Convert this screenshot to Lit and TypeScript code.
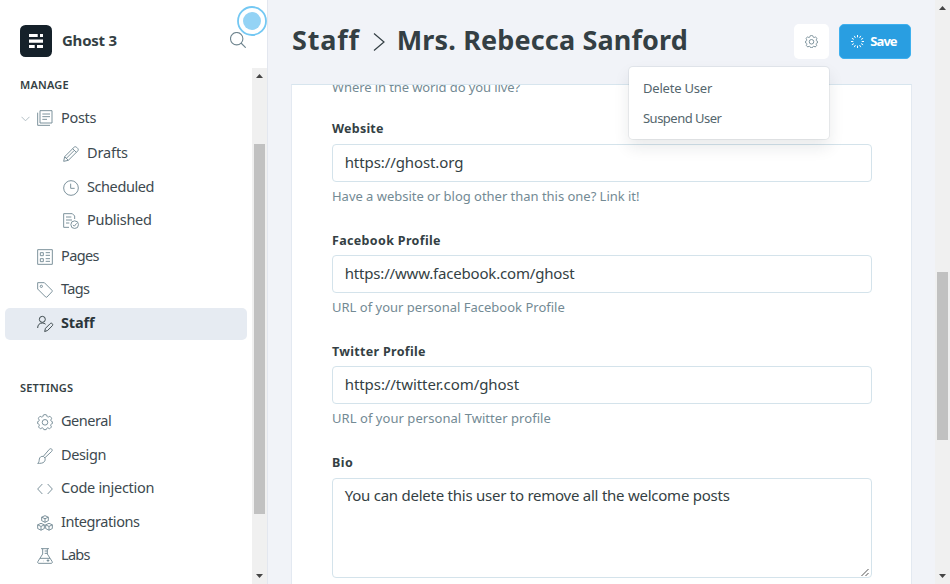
import { LitElement, html, css, svg, nothing } from "lit";
import { customElement, property, state } from "lit/decorators.js";

const measureContext = document.createElement("canvas").getContext("2d")!;

/** One line of text, tracked so that its glyphs span the given width. */
@customElement("fit-text")
class FitText extends LitElement {
  @property() text = "";
  @property({ type: Number }) span = 0;
  @state() private tracking = 0;

  static styles = css`
    :host { display: inline-block; white-space: nowrap; }
  `;

  firstUpdated() {
    const s = getComputedStyle(this);
    measureContext.font = `${s.fontWeight} ${s.fontSize} ${s.fontFamily}`;
    const m = measureContext.measureText(this.text);
    const ink = m.actualBoundingBoxLeft + m.actualBoundingBoxRight;
    this.tracking = (this.span - ink) / Math.max(1, this.text.length - 1);
  }

  render() {
    return html`<span style="letter-spacing:${this.tracking.toFixed(3)}px">${this.text}</span>`;
  }
}

const gear = svg`<path d="M9.500 1.500c.7-.7 4.300-.7 5 0l.7 2.200c.3.900 1.200 1.200 2 .8l2-1c1 .1 2.500 2.100 2.700 3.300l-1.100 2.100c-.4.800 0 1.800.8 2l1.400.6v3l-1.600.7c-.9.3-1.200 1.200-.8 2l1 2c-.1 1-2.100 2.700-3 2.800l-2-1.100c-.8-.4-1.800 0-2.100.8l-.8 1.800h-3.400l-.8-1.800c-.3-.8-1.300-1.200-2.100-.8l-2 1.100c-1-.1-2.900-1.800-3-2.800l1-2c.4-.8.1-1.700-.8-2L1 14.500v-3l1.400-.6c.9-.3 1.200-1.200.8-2L2.100 6.800c.2-1.200 1.700-3.200 2.700-3.300l2 1c.8.4 1.700.1 2-.8z"/><circle cx="12" cy="12.500" r="4.200"/>`;

const icons: Record<string, unknown> = {
  posts: svg`<path d="M4.500 1h18v18.500h-18zM1 4v19h18.500M8 6h11.500M8 10h11.500M8 14h7"/>`,
  drafts: svg`<path d="M1 23l1.500-7L16.500 2c1.200-1.200 2.800-1.200 4 0l1.500 1.500c1.200 1.200 1.200 2.800 0 4L8 21.500zM2.500 16L8 21.500M14.500 4l5.500 5.500M17 6.500L5 18.500"/>`,
  scheduled: svg`<circle cx="12" cy="12" r="11"/><path d="M11.500 5.500v7h6"/>`,
  published: svg`<path d="M9 21.500H1V1h13l3.500 3.500V9M4.500 6h8M4.500 10.500h9M4.500 15h5"/><circle cx="17.500" cy="17.500" r="5.700"/><path d="M15 17.800l2 2 3.400-4.300"/>`,
  pages: svg`<path d="M1 1h22v22H1zM5 5.500h4.500V10H5zM5 14.500h4.500V19H5zM13 5.500h6.500M13 9.500h6.500M13 14.500h6.500M13 18.500h6.500"/>`,
  tags: svg`<path d="M1 1h10L22.500 12.500c.7.7.7 1.300 0 2L15 22.500c-.7.7-1.300.7-2 0L1 10.500z"/><circle cx="6.500" cy="6.500" r="1.700"/>`,
  staff: svg`<circle cx="8" cy="5" r="4.500"/><path d="M1 18c0-4.500 2.500-7.500 7-7.500 2 0 3.500.6 4.800 1.800M11.500 23.300l1.200-4.800 7-7c1-1 2.300-.9 3.200 0 .8.800.9 2.200 0 3.200l-7 7z"/>`,
  general: gear,
  design: svg`<path d="M9.500 12.500L18.500 2c1.100-1.200 2.600-1.300 3.600-.3 1 1 .9 2.500-.3 3.600L12 14.500M9.500 12.500l3 3M9.300 12.600c-3-.6-5.300 1.200-5.800 4C3.200 19.300 3 22 1 23c4 0 8 .2 10-2.500 1.300-1.800 1.500-3.200.8-5"/>`,
  code: svg`<path d="M8 4.500L1 12l7 7.500M16 4.500L23 12l-7 7.500"/>`,
  integrations: svg`<path d="M12 1l5 2.300v5.200l-5 2.500-5-2.500V3.300zM7 3.300l5 2.300 5-2.300M12 5.600V11M6 12.500l5 2.200v5.600l-5 2.500-5-2.500v-5.600zM1 14.700l5 2.500 5-2.500M6 17.200v5.600M18 12.500l5 2.200v5.600l-5 2.500-5-2.500v-5.600zM13 14.700l5 2.500 5-2.500M18 17.200v5.600"/>`,
  labs: svg`<path d="M6 1h12M8.500 1v8L1.500 20c-1 1.700-.5 3 1.500 3h18c2 0 2.500-1.300 1.500-3L15.500 9V1M4.500 15.500h15M11.500 4.500h4M11.500 8h4M14.500 18.800h4M16.500 16.800v4M9 19.500h.5"/>`,
};

interface NavItem { icon: string; label: string; span: number; child?: boolean; active?: boolean; open?: boolean; }

const manage: NavItem[] = [
  { icon: "posts", label: "Posts", span: 34.500, open: true },
  { icon: "drafts", label: "Drafts", span: 40, child: true },
  { icon: "scheduled", label: "Scheduled", span: 66.500, child: true },
  { icon: "published", label: "Published", span: 63, child: true },
  { icon: "pages", label: "Pages", span: 37.500 },
  { icon: "tags", label: "Tags", span: 29 },
  { icon: "staff", label: "Staff", span: 34.500, active: true },
];
const settings: NavItem[] = [
  { icon: "general", label: "General", span: 50 },
  { icon: "design", label: "Design", span: 43.500 },
  { icon: "code", label: "Code injection", span: 92.500 },
  { icon: "integrations", label: "Integrations", span: 79 },
  { icon: "labs", label: "Labs", span: 28.500 },
];

@customElement("scroll-bar")
class ScrollBar extends LitElement {
  @property({ type: Number }) offset = 0;
  @property({ type: Number }) size = 0;

  static styles = css`
    :host { display: flex; flex-direction: column; width: 15px; background: #f0f0f0; flex: none; }
    .arrow { display: block; width: 15px; height: 15px; flex: none; fill: #454545; }
    .track { flex: 1; }
    .thumb { width: 11px; margin-left: 2px; background: #c1c1c1; }
  `;

  render() {
    return html`
      <svg class="arrow" viewBox="0 0 15 15"><path d="M4 10h7L7.500 6z"/></svg>
      <div class="track">
        <div style="height:${this.offset}px"></div>
        <div class="thumb" style="height:${this.size}px"></div>
      </div>
      <svg class="arrow" viewBox="0 0 15 15"><path d="M4 5h7L7.500 9z"/></svg>`;
  }
}

@customElement("side-nav")
class SideNav extends LitElement {
  static styles = css`
    :host { display: flex; flex-direction: column; width: 267px; flex: none; background: #fff; border-right: 1px solid #e3e7ef; position: relative; }
    .head { display: flex; align-items: center; height: 68px; padding: 0 21px 0 20px; box-sizing: border-box; flex: none; }
    .logo { width: 32px; height: 32px; margin-top: 14px; flex: none; }
    .name { margin: 11px 0 0 10px; font-size: 15px; font-weight: 700; color: #343f44; flex: 1; }
    .search { width: 16px; height: 16px; margin-top: 12px; fill: none; stroke: #6f858f; stroke-width: 1.1; }
    .pulse { position: absolute; left: 237px; top: 6px; width: 30px; height: 30px; }
    .scroll { display: flex; flex: 1; min-height: 0; }
    .list { flex: 1; padding: 0 5px; }
    h2 { margin: 0; padding: 9px 0 0 15px; height: 25px; box-sizing: content-box; font-size: 11px; font-weight: 600; line-height: 16px; color: #343f44; }
    h2.second { padding-top: 38.500px; height: 26px; }
    .row { display: flex; align-items: center; height: 32px; margin-bottom: 1.6px; border-radius: 5px; font-size: 14.500px; color: #3d494f; }
    .row.open { margin-bottom: 4px; }
    .row.last-child { margin-bottom: 3.600px; }
    .row.active { background: #e6ebf2; font-weight: 700; color: #2b363b; }
    .arrow { width: 9px; height: 6px; margin: 2px 7px 0 16px; fill: none; stroke: #b3bfc5; }
    .indent { width: 32px; }
    .indent.deep { width: 58px; }
    .icon { width: 16px; height: 16px; flex: none; fill: none; stroke: #738a94; stroke-width: 1.4; stroke-linejoin: round; overflow: visible; }
    .active .icon { stroke: #343f44; }
    .label { margin: 0 0 4px 8px; }
    .open .label { margin-bottom: 3px; }
  `;

  private row(item: NavItem, i: number, all: NavItem[]) {
    const lastChild = item.child && !all[i + 1]?.child;
    return html`<div class="row ${item.open ? "open" : ""} ${item.active ? "active" : ""} ${lastChild ? "last-child" : ""}">
      ${item.open
        ? html`<svg class="arrow" viewBox="0 0 9 6"><path d="M.5.800l4 4 4-4"/></svg>`
        : html`<div class="indent ${item.child ? "deep" : ""}"></div>`}
      <svg class="icon" viewBox="0 0 24 24">${icons[item.icon]}</svg>
      <fit-text class="label" text=${item.label} span=${item.span}></fit-text>
    </div>`;
  }

  render() {
    return html`
      <div class="head">
        <svg class="logo" viewBox="0 0 32 32">
          <rect width="32" height="32" rx="5.500" fill="#15212a"/>
          <path fill="#fff" d="M9 9h8.700v3H9zM20 9h3v3h-3zM9 14.500h14v3.300H9zM9 20h5.700v3H9zM17 20h6v3h-6z"/>
        </svg>
        <fit-text class="name" text="Ghost 3" span="54.5"></fit-text>
        <svg class="search" viewBox="0 0 16 16"><circle cx="6.700" cy="6.700" r="6.200"/><path d="M11 11l4.700 4.700"/></svg>
      </div>
      <div class="scroll">
        <div class="list">
          <h2><fit-text text="MANAGE" span="47.5"></fit-text></h2>
          ${manage.map((n, i, a) => this.row(n, i, a))}
          <h2 class="second"><fit-text text="SETTINGS" span="53"></fit-text></h2>
          ${settings.map((n, i, a) => this.row(n, i, a))}
        </div>
        <scroll-bar offset="61" size="370"></scroll-bar>
      </div>
      <svg class="pulse" viewBox="0 0 30 30">
        <circle cx="15" cy="15" r="14" fill="#fff" stroke="#74c8f3" stroke-width="1.800"/>
        <circle cx="15" cy="15" r="9" fill="#94d3f5"/>
      </svg>`;
  }
}

interface Field { label: string; span: number; value: string; valueSpan: number; help?: string; helpSpan?: number; area?: boolean; }

const fields: Field[] = [
  { label: "Website", span: 51, value: "https://ghost.org", valueSpan: 116.500, help: "Have a website or blog other than this one? Link it!", helpSpan: 306 },
  { label: "Facebook Profile", span: 107, value: "https://www.facebook.com/ghost", valueSpan: 229.500, help: "URL of your personal Facebook Profile", helpSpan: 231.500 },
  { label: "Twitter Profile", span: 93, value: "https://twitter.com/ghost", valueSpan: 174, help: "URL of your personal Twitter profile", helpSpan: 217.500 },
  { label: "Bio", span: 20, value: "You can delete this user to remove all the welcome posts", valueSpan: 385, area: true },
];

@customElement("app-root")
class AppRoot extends LitElement {
  static styles = css`
    :host { display: flex; width: 950px; height: 584px; overflow: hidden; background: #f1f3f8; font-family: "Noto Sans", "Open Sans", sans-serif; color: #343f44; }
    .main { flex: 1; display: flex; flex-direction: column; padding: 0 23px; min-width: 0; }
    .top { display: flex; align-items: center; height: 84px; flex: none; position: relative; box-sizing: border-box; padding: 0 1px 1px 0; }
    .title { font-size: 27px; font-weight: 700; line-height: 36px; color: #343f44; margin: 0 0 3px 1px; }
    .sep { width: 12px; height: 18px; margin: 0 11px 0 13px; fill: none; stroke: #343f44; stroke-width: 1.2; }
    .crumbs { display: flex; align-items: center; flex: 1; }
    .gear-button, .save { display: flex; align-items: center; justify-content: center; height: 35px; border-radius: 5px; box-sizing: border-box; }
    .gear-button { width: 35px; background: #fff; margin-right: 10px; }
    .gear { width: 13px; height: 13px; fill: none; stroke: #738a94; stroke-width: 1.7; }
    .save { width: 72px; background: #299ee1; border: 1px solid #3eb0ef; color: #fff; font-size: 13px; font-weight: 700; gap: 6px; padding-right: 2px; }
    .save fit-text { margin-bottom: 2px; }
    .spinner { width: 13px; height: 13px; stroke: #fff; fill: none; }
    .menu { position: absolute; z-index: 2; left: 338px; top: 67px; width: 200px; height: 72px; box-sizing: border-box; padding: 6px 14px; background: #fff; border-radius: 4px; box-shadow: 0 0 0 1px rgba(99,114,130,.1), 0 8px 16px rgba(27,39,51,.1); display: flex; flex-direction: column; font-size: 13px; color: #54666d; }
    .menu-item { height: 30px; line-height: 31px; }
    .card { flex: 1; min-height: 0; overflow: hidden; background: #fff; border: 1px solid #e3e9f1; border-top-color: #d7e5ee; border-bottom: 0; padding: 0 39px 0 40px; }
    .clipped { margin-top: -8px; margin-bottom: 21.400px; }
    .help { height: 20px; line-height: 20px; font-size: 13px; color: #738a94; }
    .label { height: 20px; line-height: 22px; font-size: 12.500px; font-weight: 700; margin-bottom: 5.700px; }
    .field { margin-bottom: 23.600px; }
    .input { height: 38px; box-sizing: border-box; border: 1px solid #d4e3eb; border-radius: 4px; padding: 0 12px 0 11.700px; line-height: 35px; font-size: 15px; margin-bottom: 3.900px; color: #343f44; }
    .input.area { height: 100px; display: flex; justify-content: space-between; padding-right: 1px; line-height: 33px; }
    .grip { width: 9px; height: 9px; align-self: flex-end; stroke: #555; stroke-width: 1; fill: none; }
  `;

  render() {
    const rays = Array.from({ length: 12 }, (_, i) => {
      const a = (i * Math.PI) / 6;
      const c = Math.cos(a), s = Math.sin(a);
      return `M${6.5 + 4.2 * c} ${6.5 + 4.2 * s}L${6.5 + 6.5 * c} ${6.5 + 6.5 * s}`;
    }).join("");
    return html`
      <side-nav></side-nav>
      <div class="main">
        <div class="top">
          <div class="crumbs">
            <fit-text class="title" text="Staff" span="68"></fit-text>
            <svg class="sep" viewBox="0 0 12 18"><path d="M1 .5l10 8.500-10 8.500"/></svg>
            <fit-text class="title" text="Mrs. Rebecca Sanford" span="288"></fit-text>
          </div>
          <div class="gear-button"><svg class="gear" viewBox="0 0 24 24">${gear}</svg></div>
          <div class="save">
            <svg class="spinner" viewBox="0 0 13 13"><path d=${rays}/></svg>
            <fit-text text="Save" span="27.5"></fit-text>
          </div>
          <div class="menu">
            <fit-text class="menu-item" text="Delete User" span="69"></fit-text>
            <fit-text class="menu-item" text="Suspend User" span="79.5"></fit-text>
          </div>
        </div>
        <div class="card">
          <div class="help clipped"><fit-text text="Where in the world do you live?" span="188.5"></fit-text></div>
          ${fields.map((f) => html`<div class="field">
            <div class="label"><fit-text text=${f.label} span=${f.span}></fit-text></div>
            <div class="input ${f.area ? "area" : ""}">
              <fit-text text=${f.value} span=${f.valueSpan}></fit-text>
              ${f.area ? html`<svg class="grip" viewBox="0 0 9 9"><path d="M.500 8l7-7M4.500 8l3-3"/></svg>` : nothing}
            </div>
            ${f.help ? html`<div class="help"><fit-text text=${f.help} span=${f.helpSpan}></fit-text></div>` : nothing}
          </div>`)}
        </div>
      </div>
      <scroll-bar offset="257" size="168"></scroll-bar>`;
  }
}
